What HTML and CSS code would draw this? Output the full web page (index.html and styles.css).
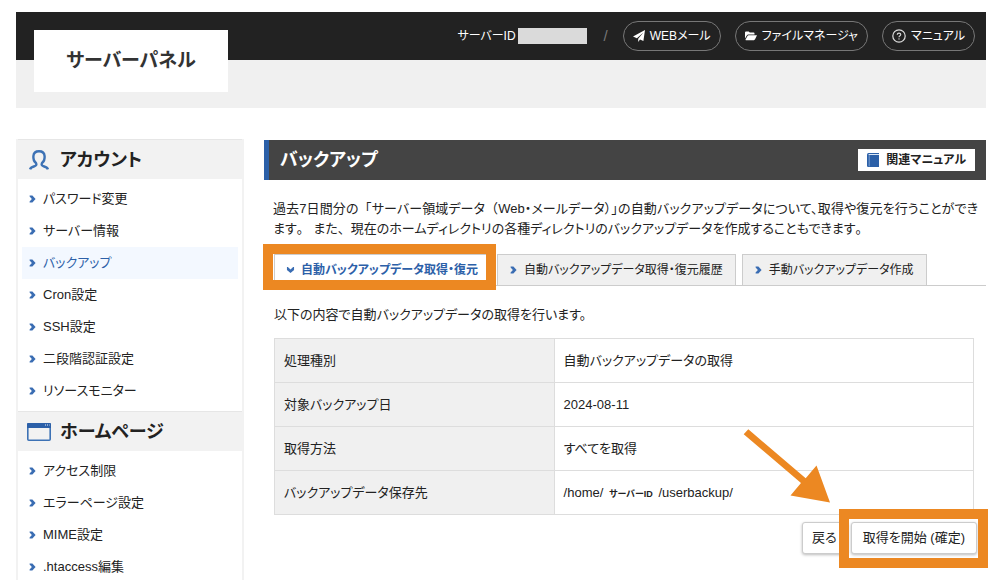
FILE: index.html
```html
<!DOCTYPE html>
<html lang="ja">
<head>
<meta charset="utf-8">
<meta name="viewport" content="width=device-width, initial-scale=1">
<title>バックアップ | サーバーパネル</title>
<link rel="stylesheet" href="styles.css">
</head>
<body>
<svg class="sprite" aria-hidden="true">
  <symbol id="chevron" viewBox="0 0 7 8"><path d="M.6 .4H3.4L6.6 4 3.4 7.6H.6V6.6L2.9 4 .6 1.4z"/></symbol>
</svg>
<header class="header">
  <div class="topbar">
    <span class="server-id">サーバーID<span class="mask"></span></span>
    <span class="slash">/</span>
    <a class="pill" href="#">
      <svg width="12" height="12" viewBox="0 0 12 12" aria-hidden="true"><path fill="#fff" d="M12 0L10.4 11 7 9.6 5.2 12V8.8L10.4 2.6 3.9 8.2 0 6.6z"/></svg>
      WEBメール</a>
    <a class="pill" href="#">
      <svg width="12" height="12" viewBox="0 0 13 12" aria-hidden="true"><path fill="#fff" d="M0 8.6V2.1Q0 1 1.1 1H4l1.2 1.3h4.1q1 0 1 1v1H3.6q-1 0-1.5.8zM.6 9.9L2.7 6q.4-.8 1.2-.8H13L10.9 9.6q-.4.9-1.3.9H1q-.6 0-.4-.6z"/></svg>
      ファイルマネージャ</a>
    <a class="pill" href="#">
      <svg width="14" height="14" viewBox="0 0 14 14" aria-hidden="true"><circle cx="7" cy="7" r="6.2" fill="none" stroke="#ddd" stroke-width="1.2"/><path d="M5.2 5.7Q5.3 4.1 7 4.1T8.8 5.6Q8.8 6.4 7.7 7 7 7.4 7 8.3" fill="none" stroke="#ddd" stroke-width="1.1"/><circle cx="7" cy="9.9" r=".7" fill="#ddd"/></svg>
      マニュアル</a>
  </div>
  <div class="subbar"></div>
  <div class="logo">サーバーパネル</div>
</header>

<div class="columns">
  <nav class="sidebar">
    <h2 class="menu-title">
      <svg width="24" height="20" viewBox="0 0 24 20" aria-hidden="true"><path d="M3.1 19.4Q3.6 17.4 6.8 16.5 10.4 15.6 9 13 6 10.6 6.4 6 6.8 1.2 12 1.2T17.6 6Q18 10.6 15 13 13.6 15.6 17.2 16.5 20.4 17.4 20.9 19.4" fill="none" stroke="#3d72b5" stroke-width="2.4"/></svg>
      アカウント</h2>
    <ul class="menu">
      <li><a href="#"><svg class="chev"><use href="#chevron"/></svg>パスワード変更</a></li>
      <li><a href="#"><svg class="chev"><use href="#chevron"/></svg>サーバー情報</a></li>
      <li><a class="current" href="#"><svg class="chev"><use href="#chevron"/></svg>バックアップ</a></li>
      <li><a href="#"><svg class="chev"><use href="#chevron"/></svg>Cron設定</a></li>
      <li><a href="#"><svg class="chev"><use href="#chevron"/></svg>SSH設定</a></li>
      <li><a href="#"><svg class="chev"><use href="#chevron"/></svg>二段階認証設定</a></li>
      <li><a href="#"><svg class="chev"><use href="#chevron"/></svg>リソースモニター</a></li>
    </ul>
    <h2 class="menu-title">
      <svg width="24" height="18" viewBox="0 0 24 18" aria-hidden="true"><rect x=".8" y=".8" width="22.4" height="16.4" rx="1" fill="none" stroke="#3d72b5" stroke-width="1.6"/><path d="M0 1q0-1 1-1h22q1 0 1 1v4H0z" fill="#2c60a8"/><path d="M18 2h1m1 0h1m1 0h.6" stroke="#fff" stroke-width=".9"/></svg>
      ホームページ</h2>
    <ul class="menu">
      <li><a href="#"><svg class="chev"><use href="#chevron"/></svg>アクセス制限</a></li>
      <li><a href="#"><svg class="chev"><use href="#chevron"/></svg>エラーページ設定</a></li>
      <li><a href="#"><svg class="chev"><use href="#chevron"/></svg>MIME設定</a></li>
      <li><a href="#"><svg class="chev"><use href="#chevron"/></svg>.htaccess編集</a></li>
    </ul>
  </nav>

  <main class="main">
    <div class="page-title">
      <h1>バックアップ</h1>
      <a class="manual" href="#">
        <svg width="12" height="14" viewBox="0 0 12 14" aria-hidden="true"><path d="M1.5 0H12v14H1.2Q0 14 0 12.8V1.5Q0 0 1.5 0z" fill="#2c60a8"/><path d="M2.2 2.2V13.4" stroke="#8fb0dc" stroke-width=".8"/><path d="M1.6 1.5H12" stroke="#dce8f6" stroke-width="1"/></svg>
        関連マニュアル</a>
    </div>
    <p class="lead">過去7日間分の<span class="full">「</span>サーバー領域データ<span class="full">（</span>Web・メールデータ）」の自動バックアップデータについて、取得や復元を行うことができます<span class="full">。</span> また<span class="full">、</span>現在のホームディレクトリの各種ディレクトリのバックアップデータを作成することもできます<span class="full">。</span></p>
    <nav class="tabs">
      <a class="tab active" href="#"><svg class="chev down"><use href="#chevron"/></svg>自動バックアップデータ取得・復元</a>
      <a class="tab" href="#"><svg class="chev"><use href="#chevron"/></svg>自動バックアップデータ取得・復元履歴</a>
      <a class="tab" href="#"><svg class="chev"><use href="#chevron"/></svg>手動バックアップデータ作成</a>
    </nav>
    <form class="confirm">
      <p>以下の内容で自動バックアップデータの取得を行います。</p>
      <table class="details">
        <tr><th scope="row">処理種別</th><td>自動バックアップデータの取得</td></tr>
        <tr><th scope="row">対象バックアップ日</th><td>2024-08-11</td></tr>
        <tr><th scope="row">取得方法</th><td>すべてを取得</td></tr>
        <tr><th scope="row">バックアップデータ保存先</th><td>/home/ <b class="id">サーバーID</b> /userbackup/</td></tr>
      </table>
      <div class="actions">
        <button class="btn" type="button">戻る</button>
        <span class="marked"><button class="btn" type="button">取得を開始 (確定)</button></span>
        <svg class="arrow" width="88" height="75" viewBox="0 0 88 75" aria-hidden="true"><path fill="#ec8822" d="M5.3.3L62.7 49.3 73.5 36.5 87 73.5 47.5 66.5 58 54 .7 5.3z"/></svg>
      </div>
    </form>
  </main>
</div>
</body>
</html>
```
FILE: styles.css
```css
* {
  box-sizing: border-box;
}

body {
  margin: 0;
  padding: 12px 14px 0 16px;
  background: #fff;
  color: #222;
  font-family: "Liberation Sans", "Noto Sans CJK JP", sans-serif;
  font-size: 13px;
  line-height: 20px;
  font-feature-settings: "palt";
}

h1, h2, p, ul {
  margin: 0;
  padding: 0;
}

a {
  color: inherit;
  text-decoration: none;
}

.sprite {
  position: absolute;
  width: 0;
  height: 0;
}

.chev {
  flex: none;
  width: 7px;
  height: 8px;
  fill: #3a6db3;
}

.chev.down {
  transform: rotate(90deg);
}

/* Header */
.header {
  position: relative;
}

.topbar {
  display: flex;
  align-items: center;
  justify-content: flex-end;
  height: 48px;
  padding-right: 11px;
  background: #222;
  color: #fff;
  font-size: 12px;
}

.subbar {
  height: 48px;
  background: #f0f0f0;
}

.server-id {
  display: flex;
  align-items: center;
  gap: 2px;
}

.mask {
  width: 69px;
  height: 16px;
  background: #dadada;
}

.slash {
  margin: 0 15px 0 17px;
  color: #777;
  font-size: 15px;
}

.pill {
  display: flex;
  align-items: center;
  gap: 5px;
  height: 30px;
  padding: 0 9px;
  border: 1px solid #777;
  border-radius: 15px;
}

.pill + .pill {
  margin-left: 14px;
}

.logo {
  position: absolute;
  top: 18px;
  left: 18px;
  width: 194px;
  height: 62px;
  background: #fff;
  color: #333;
  font-size: 19px;
  font-weight: bold;
  line-height: 62px;
  text-align: center;
}

/* Columns */
.columns {
  display: grid;
  grid-template-columns: 228px 1fr;
  gap: 20px;
  margin-top: 31px;
}

.sidebar {
  border: solid #f2f2f2;
  border-width: 0 2px;
}

.menu-title {
  display: flex;
  align-items: center;
  gap: 9px;
  height: 40px;
  padding-left: 9px;
  border-top: 1px solid #e6e6e6;
  background: #f2f2f2;
  font-size: 18px;
}

.menu {
  padding: 4px;
  list-style: none;
}

.menu a {
  display: flex;
  align-items: center;
  gap: 7px;
  height: 32px;
  padding-left: 7px;
}

.menu .current {
  background: #f3f8ff;
  color: #2c60a8;
}

/* Main */
.main {
  padding-top: 1px;
}

.page-title {
  display: flex;
  align-items: center;
  justify-content: space-between;
  height: 40px;
  padding: 0 11px;
  border-left: 5px solid #2c60a8;
  background: #444;
  color: #fff;
}

.page-title h1 {
  font-size: 18px;
}

.manual {
  display: flex;
  align-items: center;
  gap: 7px;
  height: 22px;
  padding: 0 9px;
  background: #fff;
  color: #222;
  font-size: 12px;
  font-weight: bold;
}

.lead {
  padding: 19px 8px 15px 9px;
  text-align: justify;
}

.full {
  font-feature-settings: normal;
}

.tabs {
  display: flex;
  gap: 6px;
  padding-left: 10px;
  border-bottom: 1px solid #ccc;
  font-size: 12px;
}

.tab {
  position: relative;
  display: flex;
  align-items: center;
  gap: 7px;
  height: 31px;
  padding: 0 12px;
  border: 1px solid #ccc;
  border-bottom: 0;
  background: #f0f0f0;
}

.tab.active {
  background: #fff;
  color: #2c60a8;
  font-weight: bold;
}

/* Highlight frames */
.tab.active::after,
.marked::after {
  content: "";
  position: absolute;
  border: 10px solid #ec8822;
  pointer-events: none;
}

.tab.active::after {
  inset: -11px -6px -5px -12px;
}

.marked::after {
  inset: -13px -11px -14px -12px;
}

.confirm {
  padding: 19px 12px 0 10px;
}

.details {
  width: 100%;
  margin-top: 13px;
  border-collapse: collapse;
}

.details th,
.details td {
  padding: 12px 9px 11px;
  border: 1px solid #ddd;
  font-weight: normal;
  text-align: left;
}

.details th {
  width: 40%;
  background: #f0f0f0;
}

.id {
  margin: 0 2px;
  font-size: 9px;
  line-height: 1;
}

.actions {
  position: relative;
  display: flex;
  justify-content: flex-end;
  gap: 4px;
  margin: 7px -3px 0 0;
}

.marked {
  position: relative;
}

.btn {
  height: 32px;
  padding: 0 9px;
  border: 1px solid #ccc;
  border-radius: 3px;
  background: #fff;
  box-shadow: 0 1px 3px #bbb;
  color: #222;
  font: inherit;
}

.marked .btn {
  padding: 0 11px;
}

.arrow {
  position: absolute;
  right: 146px;
  bottom: 50px;
}
```
